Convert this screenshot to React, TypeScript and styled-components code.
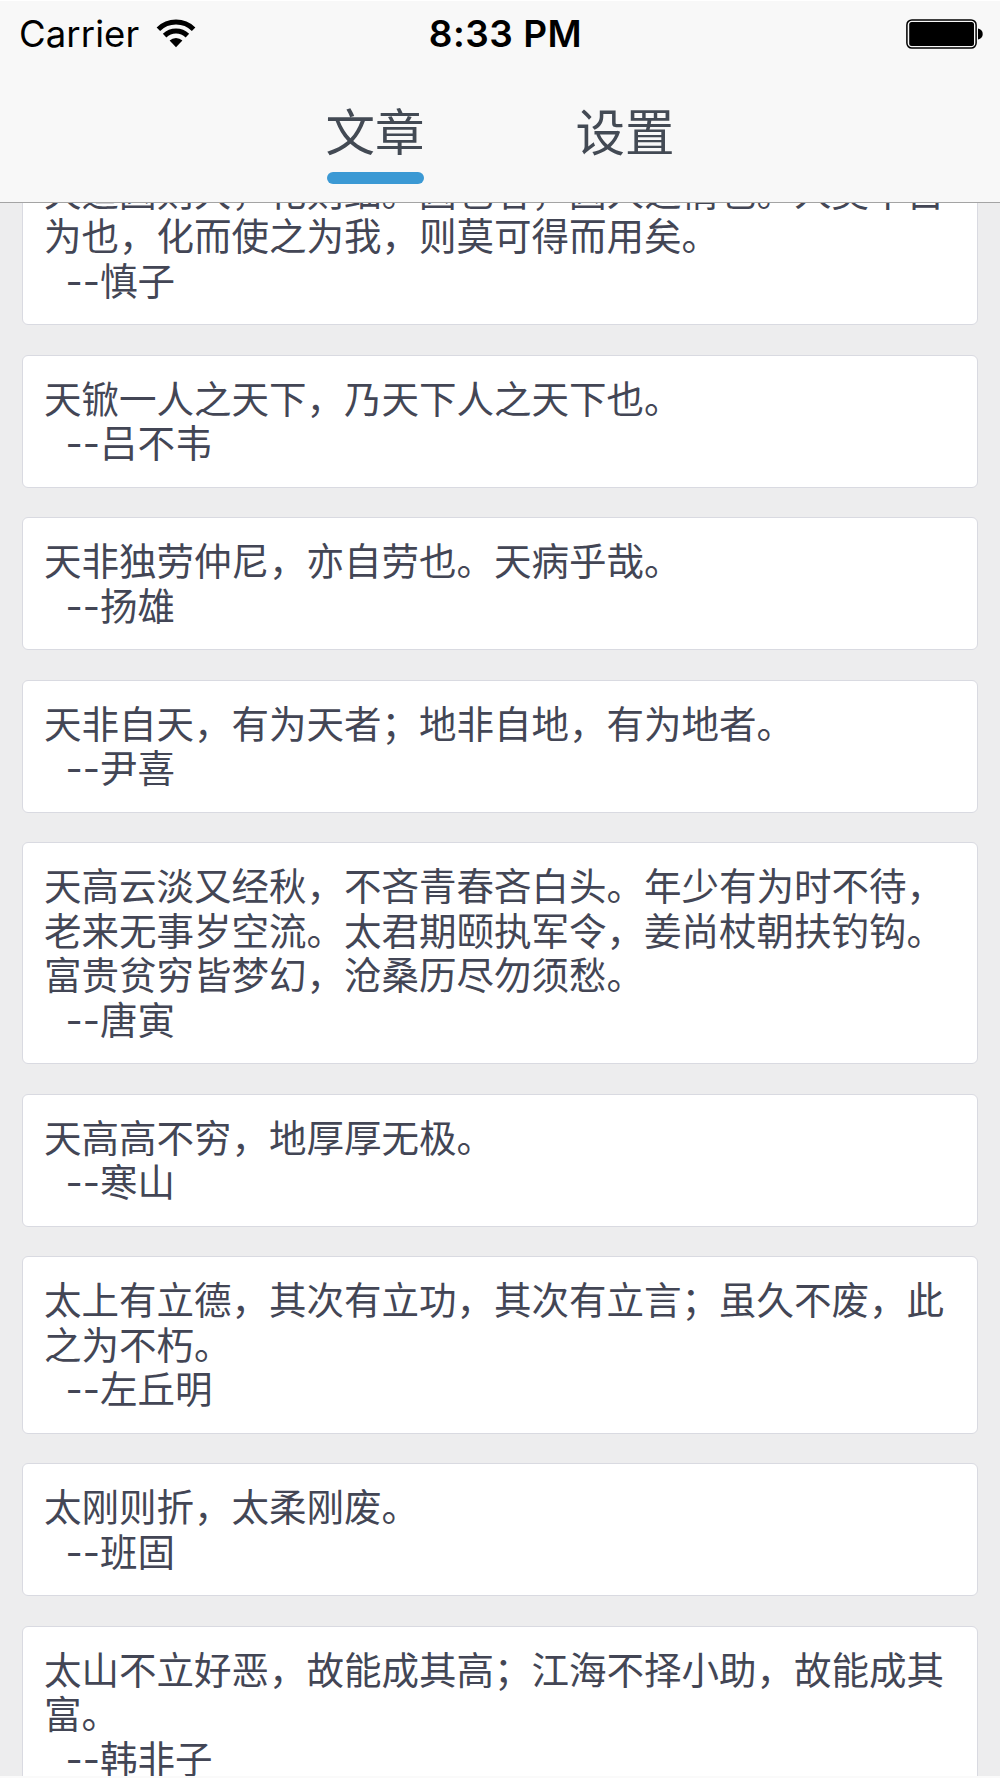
import React from "react";
import styled, { createGlobalStyle } from "styled-components";

const GlobalStyle = createGlobalStyle`
  * { box-sizing: border-box; }
  body { margin: 0; background: #ededee; }
`;

const Screen = styled.div`
  display: flex;
  flex-direction: column;
  width: 1000px;
  height: 1778px;
  overflow: hidden;
  background: #ededee;
  border-bottom: 2px solid #fafafa;
  font-family: Inter, "Noto Sans CJK SC", sans-serif;
`;

const Header = styled.header`
  flex: none;
  height: 203px;
  background: #f8f8f8;
  border-top: 1px solid #ffffff;
  border-bottom: 1.5px solid #a4a4a4;
`;

const StatusBar = styled.div`
  display: grid;
  grid-template-columns: 1fr auto 1fr;
  align-items: center;
  height: 66px;
  padding: 0 16px 0 19px;
  color: #000;
`;

const Network = styled.div`
  display: flex;
  align-items: center;
  gap: 17px;
`;

const Carrier = styled.span`
  font-size: 36.5px;
  line-height: 44px;
  letter-spacing: 0.1px;
`;

const Clock = styled.span`
  font-size: 37px;
  line-height: 44px;
  font-weight: 600;
  letter-spacing: 0.5px;
  margin-left: 8px;
`;

const BatterySlot = styled.div`
  display: flex;
  justify-content: flex-end;
`;

const Tabs = styled.nav`
  display: flex;
  justify-content: center;
  height: 134px;
  gap: 152px;
`;

const Tab = styled.a<{ $active?: boolean }>`
  display: flex;
  flex-direction: column;
  align-items: center;
  width: 98px;
  padding-top: 36px;
  font-size: 49.5px;
  line-height: 60px;
  white-space: nowrap;
  color: #434a54;

  &::after {
    content: "";
    width: 97px;
    height: 12px;
    margin-top: 9px;
    border-radius: 6px;
    background: ${(p) => (p.$active ? "#3b99d4" : "transparent")};
  }
`;

const List = styled.main`
  flex: 1;
  min-height: 0;
  overflow: hidden;
  display: flex;
  flex-direction: column;
  justify-content: flex-start;
  gap: 29.5px;
  padding: 0 22px;
`;

const Card = styled.article<{ $clipped?: boolean }>`
  flex: none;
  padding: 21.8px 20px 20.2px 21px;
  margin-top: ${(p) => (p.$clipped ? "-55px" : "0")};
  border: 1px solid #d9dae1;
  border-radius: 6px;
  background: #fff;
  color: #434655;
  font-size: 37.5px;
  line-height: 44.5px;
`;

const Quote = styled.p`
  margin: 0;
  line-break: anywhere;
`;

const Author = styled.p`
  margin: 0;
  padding-left: 21.5px;
`;

const quotes = [
  { text: "天道因则大，化则细。因也者，因人之情也。人莫不自为也，化而使之为我，则莫可得而用矣。", author: "慎子" },
  { text: "天锨一人之天下，乃天下人之天下也。", author: "吕不韦" },
  { text: "天非独劳仲尼，亦自劳也。天病乎哉。", author: "扬雄" },
  { text: "天非自天，有为天者；地非自地，有为地者。", author: "尹喜" },
  {
    text: "天高云淡又经秋，不吝青春吝白头。年少有为时不待，老来无事岁空流。太君期颐执军令，姜尚杖朝扶钓钩。富贵贫穷皆梦幻，沧桑历尽勿须愁。",
    author: "唐寅",
  },
  { text: "天高高不穷，地厚厚无极。", author: "寒山" },
  { text: "太上有立德，其次有立功，其次有立言；虽久不废，此之为不朽。", author: "左丘明" },
  { text: "太刚则折，太柔刚废。", author: "班固" },
  { text: "太山不立好恶，故能成其高；江海不择小助，故能成其富。", author: "韩非子" },
];

const WifiIcon = () => (
  <svg width="40" height="30" viewBox="0 0 40 30">
    <g fill="none" stroke="#000" strokeWidth="5">
      <path d="M2.4 10.2 A25.2 25.2 0 0 1 37.6 10.2" />
      <path d="M8.6 16.6 A16.3 16.3 0 0 1 31.4 16.6" />
    </g>
    <path d="M13.6 21.6 A9.4 9.4 0 0 1 26.4 21.6 L20 28.2 Z" fill="#000" />
  </svg>
);

const BatteryIcon = () => (
  <svg width="78" height="30" viewBox="0 0 78 30">
    <rect x="0.9" y="0.9" width="69.2" height="28.2" rx="5" fill="none" stroke="#000" strokeWidth="1.5" />
    <rect x="3.2" y="3.1" width="64.8" height="23.8" rx="2.5" fill="#000" />
    <path d="M72 9.5 C78.3 10.3 78.3 19.7 72 20.5 Z" fill="#000" />
  </svg>
);

export default function App() {
  return (
    <>
      <GlobalStyle />
      <Screen>
        <Header>
          <StatusBar>
            <Network>
              <Carrier>Carrier</Carrier>
              <WifiIcon />
            </Network>
            <Clock>8:33 PM</Clock>
            <BatterySlot>
              <BatteryIcon />
            </BatterySlot>
          </StatusBar>
          <Tabs>
            <Tab $active>文章</Tab>
            <Tab>设置</Tab>
          </Tabs>
        </Header>
        <List>
          {quotes.map((quote, index) => (
            <Card key={quote.author} $clipped={index === 0}>
              <Quote>{quote.text}</Quote>
              <Author>--{quote.author}</Author>
            </Card>
          ))}
        </List>
      </Screen>
    </>
  );
}
